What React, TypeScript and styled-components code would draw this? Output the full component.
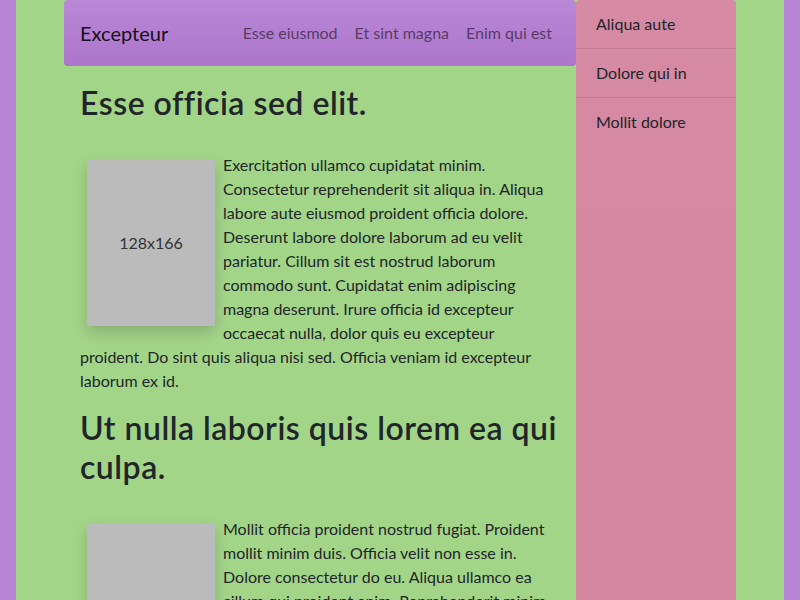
import React from 'react';
import styled, { createGlobalStyle } from 'styled-components';

const GlobalStyle = createGlobalStyle`
  html, body { margin: 0; padding: 0; }
  body {
    background: #b986d6;
    font-family: Lato, "Liberation Sans", sans-serif;
    font-size: 16px;
    line-height: 24px;
    color: #212529;
  }
`;

const Page = styled.div`
  margin: 0 16px;
  min-height: 600px;
  background: #a3d589;
  padding: 0 48px;
  display: flex;
  align-items: stretch;
`;

const Main = styled.main`
  width: 512px;
  flex: none;
`;

const Navbar = styled.nav`
  height: 66px;
  box-sizing: border-box;
  padding: 0 16px;
  display: flex;
  align-items: center;
  justify-content: space-between;
  border-radius: 4px;
  background: linear-gradient(180deg, #b988d6 0%, #ad75cc 100%);
`;

const Brand = styled.a`
  font-size: 20px;
  line-height: 30px;
  color: rgba(0, 0, 0, 0.9);
  text-decoration: none;
`;

const NavLinks = styled.div`
  display: flex;
  gap: 1px;
`;

const NavLink = styled.a`
  padding: 0 8px;
  color: rgba(0, 0, 0, 0.55);
  text-decoration: none;
`;

const Content = styled.div`
  padding: 18px 16px 0;
`;

const Section = styled.section`
  display: flow-root;
`;

const Heading = styled.h2`
  margin: 0 0 31px;
  font-size: 32px;
  line-height: 38.4px;
  font-weight: 600;
  letter-spacing: 0.5px;
`;

const Paragraph = styled.p`
  margin: 0 0 16px;
`;

const Placeholder = styled.div`
  float: left;
  width: 128px;
  height: 166px;
  margin: 7px 8px 8px 7px;
  background: #bbbbbb;
  color: #333;
  display: flex;
  align-items: center;
  justify-content: center;
  box-shadow: 0 6px 14px rgba(0, 0, 0, 0.18);
`;

const Sidebar = styled.aside`
  width: 160px;
  flex: none;
  border-radius: 4px;
  background: linear-gradient(180deg, #d68aa3 0%, #d3849f 100%);
  display: flex;
  flex-direction: column;
`;

const SideItem = styled.a`
  padding: 12px 20px;
  color: #212529;
  text-decoration: none;
  border-bottom: 1px solid rgba(0, 0, 0, 0.1);
  &:last-child { border-bottom: none; }
`;

export default function App() {
  return (
    <>
      <GlobalStyle />
      <Page>
        <Main>
          <Navbar>
            <Brand href="#">Excepteur</Brand>
            <NavLinks>
              <NavLink href="#">Esse eiusmod</NavLink>
              <NavLink href="#">Et sint magna</NavLink>
              <NavLink href="#">Enim qui est</NavLink>
            </NavLinks>
          </Navbar>
          <Content>
            <Section>
              <Heading>Esse officia sed elit.</Heading>
              <Placeholder>128x166</Placeholder>
              <Paragraph>
                Exercitation ullamco cupidatat minim. Consectetur reprehenderit sit aliqua in. Aliqua labore aute eiusmod proident officia dolore. Deserunt labore dolore laborum ad eu velit pariatur. Cillum sit est nostrud laborum commodo sunt. Cupidatat enim adipiscing magna deserunt. Irure officia id excepteur occaecat nulla, dolor quis eu excepteur proident. Do sint quis aliqua nisi sed. Officia veniam id excepteur laborum ex id.
              </Paragraph>
            </Section>
            <Section>
              <Heading>Ut nulla laboris quis lorem ea qui culpa.</Heading>
              <Placeholder>128x166</Placeholder>
              <Paragraph>
                Mollit officia proident nostrud fugiat. Proident mollit minim duis. Officia velit non esse in. Dolore consectetur do eu. Aliqua ullamco ea cillum qui proident anim. Reprehenderit minim dolore ullamco. Sunt commodo nisi velit eiusmod. Ipsum elit duis officia lorem amet.
              </Paragraph>
            </Section>
          </Content>
        </Main>
        <Sidebar>
          <SideItem href="#">Aliqua aute</SideItem>
          <SideItem href="#">Dolore qui in</SideItem>
          <SideItem href="#">Mollit dolore</SideItem>
        </Sidebar>
      </Page>
    </>
  );
}
